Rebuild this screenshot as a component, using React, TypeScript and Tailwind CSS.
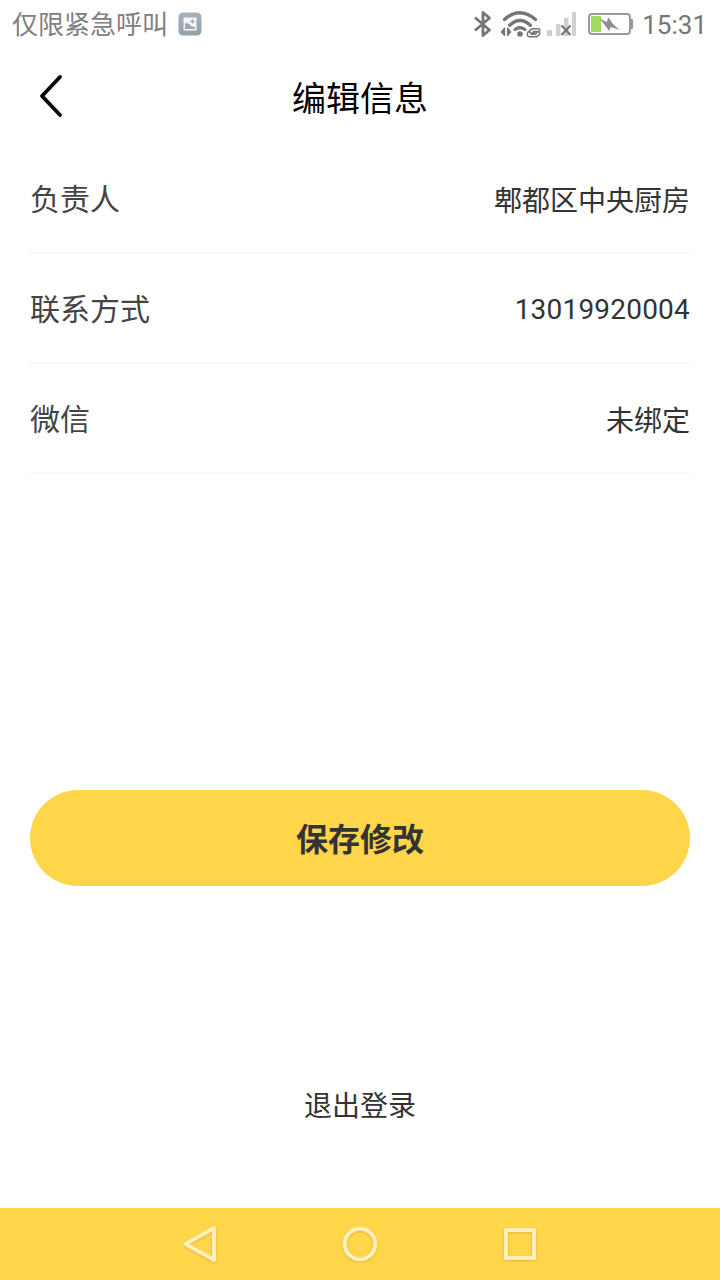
const rows = [
  { label: '负责人', value: '郫都区中央厨房', valueClass: 'pt-2' },
  { label: '联系方式', value: '13019920004', valueClass: 'pt-1 tracking-[0.2px]' },
  { label: '微信', value: '未绑定', valueClass: 'pt-2' },
]

function PictureIcon() {
  return (
    <svg width="24" height="24" viewBox="0 0 24 24">
      <defs>
        <linearGradient id="picture-bg" x1="0" y1="0" x2="0" y2="1">
          <stop offset="0" stopColor="#a6b2bb" />
          <stop offset="1" stopColor="#93a1ac" />
        </linearGradient>
      </defs>
      <rect x="0.5" y="0.5" width="23" height="23" rx="4.500" fill="url(#picture-bg)" />
      <rect x="5.500" y="5.500" width="13" height="13" fill="#f3f5f7" />
      <path d="M7 11.500c3-1 4.500.5 6 2.500 1.500 1.300 2.500.3 4 1v2h-10z" fill="#9aa8b2" />
      <path d="M14.500 7.500v4M12.500 9.500h4" stroke="#9dabb7" strokeWidth="1.300" />
    </svg>
  )
}

function BluetoothIcon() {
  return (
    <svg width="20" height="28" viewBox="0 0 20 28" fill="none" stroke="#757575" strokeWidth="2.800">
      <path d="M2 7.500l14.500 12.500-6.500 5.500v-23l6.500 5.500-14.500 12.500" strokeLinejoin="round" />
    </svg>
  )
}

function WifiIcon() {
  return (
    <svg width="42" height="28" viewBox="0 0 42 28" fill="none" stroke="#757575">
      <path d="M4.500 9.500q15-13.500 31 0M9.700 15.300q10.300-9.500 20.600 0" strokeWidth="3.300" strokeLinecap="round" />
      <path d="M15 19.500q5-3.800 10 0" strokeWidth="3" strokeLinecap="round" />
      <circle cx="20" cy="24" r="2.800" fill="#757575" stroke="none" />
      <path d="M5.200 17.500v8.500h-1l-3.700-4 3.700-4.500zM7 17.500h1l3.500 4.500-3.500 4h-1z" fill="#757575" stroke="none" />
      <path
        d="M39.500 21c.8-1.500 0-2.300-1.500-2.300h-4.500c-4 0-5.500 4.300-2 4.300h3.500M28.500 21.500c-2 2.500-1.500 5.300 1.200 5.300h5.300c4.500 0 6.500-5.300 2.800-5.300h-4.300M37 22.500c-.5 1.300-1.500 1.800-3 1.800h-3"
        strokeWidth="1.500"
        strokeLinecap="round"
      />
    </svg>
  )
}

function SignalIcon() {
  return (
    <svg width="30" height="26" viewBox="0 0 30 26">
      <path d="M0 18h5v6h-5zM9 12h4.500v12h-4.500zM17 6h4.500v18h-4.500zM25 0h4v24h-4z" fill="#d0d0d0" />
      <path d="M14.500 13.500l9 9.500M23.500 13.500l-9 9.500" stroke="#757575" strokeWidth="2.200" />
    </svg>
  )
}

function BatteryIcon() {
  return (
    <svg width="46" height="24" viewBox="0 0 46 24">
      <rect x="1" y="2" width="41" height="20" rx="3" fill="none" stroke="#999" strokeWidth="2" />
      <path d="M43 7h1q1 0 1 1v8q0 1-1 1h-1z" fill="#999" />
      <rect x="3" y="4" width="10" height="16" fill="#a0dd5f" />
      <path d="M11 6l7.500 4 2-4.500 4.500 6.500 6.500 6-8.500-3-2 4-5-7z" fill="#8f8f8f" />
    </svg>
  )
}

function StatusBar() {
  return (
    <div className="flex h-12 items-center justify-between pl-3 text-[#808080]">
      <div className="flex items-center gap-2.5">
        <span className="pt-0.5 text-[26px] leading-12">仅限紧急呼叫</span>
        <PictureIcon />
      </div>
      <div className="flex items-center pr-[13px]">
        <BluetoothIcon />
        <div className="ml-[7px]">
          <WifiIcon />
        </div>
        <div className="ml-[5px] pt-0.5">
          <SignalIcon />
        </div>
        <div className="ml-[11px]">
          <BatteryIcon />
        </div>
        <span className="ml-2 pt-px text-[26px] leading-none text-[#757575]">15:31</span>
      </div>
    </div>
  )
}

function NavBar() {
  return (
    <nav className="flex h-18 items-center justify-center gap-[120px] bg-[#ffd54a]">
      <button type="button" aria-label="返回">
        <svg className="drop-shadow-[0_1px_1px_rgba(0,0,0,0.15)]" width="40" height="40" viewBox="0 0 40 40" fill="none" stroke="#ffefbb" strokeWidth="4" strokeLinejoin="round">
          <path d="M34 4v32l-28.500-16z" />
        </svg>
      </button>
      <button type="button" aria-label="主页">
        <svg className="drop-shadow-[0_1px_1px_rgba(0,0,0,0.15)]" width="40" height="40" viewBox="0 0 40 40" fill="none" stroke="#ffefbb" strokeWidth="4">
          <circle cx="20" cy="20" r="15.300" />
        </svg>
      </button>
      <button type="button" aria-label="最近任务">
        <svg className="drop-shadow-[0_1px_1px_rgba(0,0,0,0.15)]" width="40" height="40" viewBox="0 0 40 40" fill="none" stroke="#ffefbb" strokeWidth="4" strokeLinejoin="round">
          <path d="M6 6h28v28h-28z" />
        </svg>
      </button>
    </nav>
  )
}

export default function App() {
  return (
    <div className="flex h-[1280px] w-[720px] flex-col bg-white font-[Roboto,'Noto_Sans_CJK_SC',sans-serif]">
      <StatusBar />

      <header className="grid h-24 grid-cols-[100px_1fr_100px] items-center">
        <button type="button" aria-label="返回" className="pl-[38px]">
          <svg width="28" height="44" viewBox="0 0 28 44" fill="none" stroke="#000" strokeWidth="3.800" strokeLinecap="round" strokeLinejoin="round">
            <path d="M22 3l-18 19 18 19" />
          </svg>
        </button>
        <h1 className="pt-1.5 text-center text-[34px] leading-12 text-black">编辑信息</h1>
      </header>

      <main className="flex flex-1 flex-col px-[30px]">
        <div>
          {rows.map((row) => (
            <div key={row.label} className="flex h-[110px] items-center justify-between border-b-2 border-[#f7f7f7]">
              <span className="pt-0.5 text-[30px] text-[#444]">{row.label}</span>
              <span className={`text-[28px] text-[#333] ${row.valueClass}`}>{row.value}</span>
            </div>
          ))}
        </div>

        <button type="button" className="mt-[316px] h-24 rounded-full bg-[#ffd54a] pt-1 text-[32px] font-bold text-[#333]">
          保存修改
        </button>

        <button type="button" className="mt-[201px] self-center text-[28px] leading-10 text-[#333]">
          退出登录
        </button>
      </main>

      <NavBar />
    </div>
  )
}
